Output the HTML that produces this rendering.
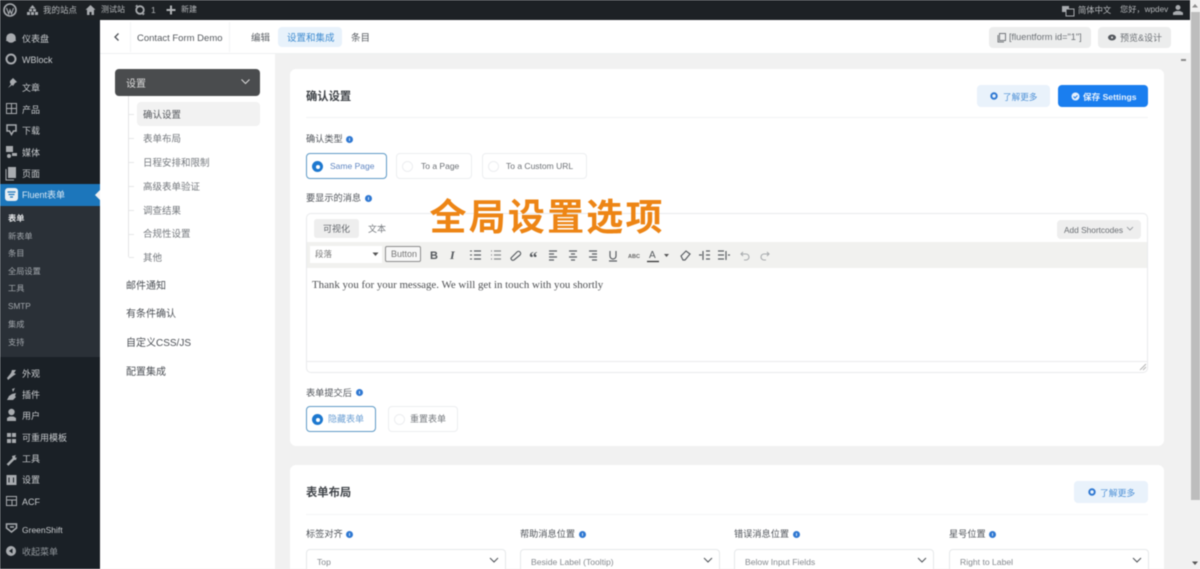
<!DOCTYPE html>
<html><head><meta charset="utf-8"><style>
html,body{margin:0;padding:0;width:1200px;height:569px;overflow:hidden;background:#f1f1f1}
body{font-family:"Liberation Sans","Noto Sans CJK SC",sans-serif;position:relative;filter:blur(.5px)}
div,span,svg{position:absolute;box-sizing:border-box}
.t{white-space:nowrap;line-height:14px}
.m{color:#c8cbce;font-size:9px;left:22px;margin-top:.5px}
.s{color:#a3a8ad;font-size:8.200px;left:8px;margin-top:1px}
.n{color:#74787d;font-size:9.500px;left:143px;margin-top:2px}
.k{color:#4c5056;font-size:10px;left:126px;margin-top:2px}
.l{color:#50545a;font-size:9.200px;margin-top:2px}
.i{width:7px;height:7px;border-radius:50%;background:#2f78d2}
.i:after{content:"";position:absolute;left:3px;top:2px;width:1px;height:3px;background:#cfe0f5}
.r{background:#fff;border:1px solid #eceef0;border-radius:4px}
.rd{width:11px;height:11px;border-radius:50%;border:1px solid #eceef0}
.on{background:#1d78cf;border:none}
.on:after{content:"";position:absolute;left:3.500px;top:3.500px;width:4px;height:4px;border-radius:50%;background:#fff}
.sel{height:30px;background:#fff;border:1px solid #e6e8ea;border-radius:4px;top:549px}
.sel .t{left:10px;top:5px;font-size:8.600px;color:#85898e}
.g{fill:#a8abaf}
.tb{fill:none;stroke:#5b5f64;stroke-width:1.200}
.tk{left:129px;width:5px;height:1px;background:#e6e7e8}
</style></head><body>
<div style="left:0;top:0;width:1190px;height:20px;background:#1d2125"></div>
<div style="left:0;top:20px;width:100px;height:549px;background:#1a2026"></div>
<div style="left:0;top:206px;width:100px;height:151px;background:#2a3037"></div>
<div style="left:0;top:184px;width:100px;height:22px;background:#1c76bb"></div>
<svg style="left:95px;top:190px" width="5" height="10"><path d="M5 0L0 5l5 5z" fill="#f1f1f1"/></svg>

<svg style="left:0;top:0" width="240" height="20">
<circle cx="10" cy="10" r="6" fill="none" stroke="#a8abaf" stroke-width="1.600"/><path d="M6.500 8l2.200 6 1.300-4 1.500 4 2-6" fill="none" stroke="#a8abaf" stroke-width="1.100"/>
<path class="g" d="M32.500 5l3 3.500h-6zM29 9h3v2.500h-3zM33 9h3v2.500h-3zM27 12h3v3h-3zM31 12h3v3h-3zM35 12h3v3h-3z"/>
<path class="g" d="M90.500 5l5 4.800h-1.500V15h-2.500v-3h-2v3H87V9.800h-1.500z"/>
<circle cx="140" cy="10" r="3.800" fill="none" stroke="#a8abaf" stroke-width="1.800"/>
<path d="M137 4.500l-2 2 3 .5zM143 15.500l2-2-3-.5z" class="g"/>
<path d="M171 5.500v9M166.500 10h9" stroke="#b0b3b6" stroke-width="2"/>
</svg>
<div class="t" style="left:43px;top:3px;font-size:8.500px;color:#b4b7ba">我的站点</div>
<div class="t" style="left:101px;top:3px;font-size:8px;color:#b4b7ba">测试站</div>
<div class="t" style="left:151px;top:3px;font-size:8.500px;color:#b4b7ba">1</div>
<div class="t" style="left:181px;top:3px;font-size:8px;color:#b4b7ba">新建</div>
<svg style="left:1060px;top:3px" width="16" height="14"><rect x="2" y="3" width="7" height="6" fill="#a8abaf"/><rect x="6" y="6" width="8" height="7" fill="#1d2125" stroke="#a8abaf"/></svg>
<div class="t" style="left:1078px;top:3px;font-size:8.300px;color:#b9bcbf">简体中文</div>
<div class="t" style="left:1120px;top:3px;font-size:8.200px;color:#b4b7ba">您好，wpdev</div>
<svg style="left:1172px;top:4px" width="12" height="12"><circle cx="6" cy="3.500" r="2.500" class="g"/><path class="g" d="M1 11V8.500l3-1.500h4l3 1.500V11z"/></svg>

<svg style="left:0;top:20px" width="100" height="549">
<path class="g" d="M6 21a5 5 0 0 1 10 0z"/><circle cx="11" cy="18" r="4.800" class="g"/>
<circle cx="11" cy="39" r="4.500" fill="none" stroke="#a8abaf" stroke-width="2"/>
<path class="g" d="M10 61l3-3 4 4-2 1-2 3-1-1-4 3 3-4-1-1z"/>
<rect x="6.500" y="83.500" width="10" height="10" fill="none" stroke="#a8abaf"/><path d="M11.500 84v10M7 88.500h10" stroke="#a8abaf"/>
<path d="M7 105h9v6h-2.500l-2 3.500-2-3.500H7z" fill="none" stroke="#a8abaf" stroke-width="1.500"/>
<path class="g" d="M6 126h7v6H6zM12 133h5v3h-5z"/><circle cx="9" cy="136" r="2" class="g"/>
<path class="g" d="M8 147h8v11H8z"/><path d="M6 149v11h8" fill="none" stroke="#a8abaf"/>
<rect x="5" y="168" width="13" height="13" rx="3" fill="#e8eef3"/><path d="M7.500 172h8M8.500 174.500h6M10 177h3" stroke="#1c76bb" stroke-width="1.300"/>
<path class="g" d="M7 358l4-5 1-3 4 0-2 3 2 1-3 2-5 4z"/>
<path class="g" d="M7 380l2-4 3-2 4-1-1 3 1 1-3 3-4 0zM12 369l3-1-2 4z"/>
<circle cx="11.500" cy="392" r="3.200" class="g"/><path class="g" d="M7 401v-3l2.500-1.500h4L16 398v3z"/>
<path class="g" d="M7 413h4v4H7zM12 413h4v4h-4zM7 419h4v4H7zM12 419h4v4h-4z"/>
<path d="M7.500 445l6-6" stroke="#a8abaf" stroke-width="2.500"/><path class="g" d="M12 436l4-1-1 2 1 1 1-1-1 3-3 0z"/>
<rect x="6.500" y="455" width="10" height="10" fill="#a8abaf"/><path d="M9 457.500v5M13.500 457.500v5" stroke="#1a2026"/>
<rect x="6.500" y="476.500" width="10" height="9" fill="none" stroke="#a8abaf"/><path d="M7 480h10M12 480v5" stroke="#a8abaf"/>
<path d="M6.500 504h10v4l-5 4-5-4zM10 507h4" fill="none" stroke="#a8abaf" stroke-width="1.500"/>
<circle cx="11" cy="531" r="5" class="g"/><path d="M12.500 528.500v5L9 531z" fill="#1a2026"/>
</svg>

<div class="t m" style="top:31px">仪表盘</div>
<div class="t m" style="top:52px">WBlock</div>
<div class="t m" style="top:80px">文章</div>
<div class="t m" style="top:102px">产品</div>
<div class="t m" style="top:123px">下载</div>
<div class="t m" style="top:145px">媒体</div>
<div class="t m" style="top:166px">页面</div>
<div class="t m" style="top:187px;color:#dbe9f4">Fluent表单</div>
<div class="t s" style="top:211px;color:#e4e6e8;font-weight:bold">表单</div>
<div class="t s" style="top:229px">新表单</div>
<div class="t s" style="top:246px">条目</div>
<div class="t s" style="top:264px">全局设置</div>
<div class="t s" style="top:281px">工具</div>
<div class="t s" style="top:299px">SMTP</div>
<div class="t s" style="top:317px">集成</div>
<div class="t s" style="top:335px">支持</div>
<div class="t m" style="top:366px">外观</div>
<div class="t m" style="top:387px">插件</div>
<div class="t m" style="top:408px">用户</div>
<div class="t m" style="top:430px">可重用模板</div>
<div class="t m" style="top:451px">工具</div>
<div class="t m" style="top:472px">设置</div>
<div class="t m" style="top:494px">ACF</div>
<div class="t m" style="top:522px;font-size:8.500px">GreenShift</div>
<div class="t m" style="top:544px;color:#92979c">收起菜单</div>

<div style="left:100px;top:20px;width:1090px;height:34px;background:#fff;border-bottom:1px solid #eef0f1"></div>
<div style="left:100px;top:54px;width:175px;height:515px;background:#fff"></div>
<svg style="left:112px;top:31px" width="10" height="12"><path d="M6.500 2.500L3 6l3.500 3.500" fill="none" stroke="#4e5257" stroke-width="1.300"/></svg>
<div style="left:130px;top:22px;width:1px;height:30px;background:#f3f4f5"></div>
<div style="left:229px;top:22px;width:1px;height:30px;background:#f3f4f5"></div>
<div class="t" style="left:137px;top:30px;margin-top:1.500px;font-size:9.500px;color:#55595e">Contact Form Demo</div>
<div class="t" style="left:251px;top:32px;font-size:9.500px;color:#5a5e63">编辑</div>
<div style="left:278px;top:27px;width:64px;height:20px;background:#e8f2fb;border-radius:4px"></div>
<div class="t" style="left:287px;top:32px;font-size:9.500px;color:#3e8bd0">设置和集成</div>
<div class="t" style="left:351px;top:32px;font-size:9.500px;color:#5a5e63">条目</div>
<div style="left:989px;top:27px;width:102px;height:21px;background:#eceded;border-radius:4px"></div>
<svg style="left:997px;top:32px" width="10" height="11"><rect x="2.500" y="1.500" width="6" height="7" fill="none" stroke="#75797d"/><path d="M1 3v7h6" fill="none" stroke="#75797d"/></svg>
<div class="t" style="left:1009px;top:30px;font-size:9.200px;color:#6d7176">[fluentform id="1"]</div>
<div style="left:1098px;top:27px;width:73px;height:21px;background:#eceded;border-radius:4px"></div>
<svg style="left:1107px;top:33px" width="10" height="9"><ellipse cx="5" cy="4.500" rx="4" ry="3" fill="#55595e"/><circle cx="5" cy="4.500" r="1" fill="#eee"/></svg>
<div class="t" style="left:1120px;top:31px;font-size:9px;color:#6d7176">预览&amp;设计</div>

<!-- left nav -->
<div style="left:115px;top:69px;width:145px;height:27px;background:#4a4c4e;border-radius:4px"></div>
<div class="t" style="left:126px;top:77.500px;font-size:10px;color:#dcdcdc">设置</div>
<svg style="left:240px;top:78px" width="11" height="8"><path d="M1.500 1.500l4 4 4-4" fill="none" stroke="#d5d5d5" stroke-width="1.100"/></svg>
<div style="left:128px;top:96px;width:1px;height:161px;background:#e3e4e5"></div>
<div class="tk" style="top:114px"></div><div class="tk" style="top:138px"></div><div class="tk" style="top:162px"></div><div class="tk" style="top:186px"></div><div class="tk" style="top:210px"></div><div class="tk" style="top:234px"></div><div class="tk" style="top:257px"></div>
<div style="left:137px;top:102px;width:123px;height:24px;background:#f2f2f2;border-radius:4px"></div>
<div class="t n" style="top:107px;color:#54575c">确认设置</div>
<div class="t n" style="top:131px">表单布局</div>
<div class="t n" style="top:155px">日程安排和限制</div>
<div class="t n" style="top:179px">高级表单验证</div>
<div class="t n" style="top:203px">调查结果</div>
<div class="t n" style="top:226px">合规性设置</div>
<div class="t n" style="top:250px">其他</div>
<div class="t k" style="top:278px">邮件通知</div>
<div class="t k" style="top:306px">有条件确认</div>
<div class="t k" style="top:335px">自定义CSS/JS</div>
<div class="t k" style="top:364px">配置集成</div>

<!-- card 1 -->
<div style="left:290px;top:69px;width:874px;height:377px;background:#fff;border-radius:6px"></div>
<div class="t" style="left:306px;top:90px;font-size:11.300px;font-weight:bold;color:#3f4348">确认设置</div>
<div style="left:306px;top:117px;width:842px;height:1px;background:#f2f3f4"></div>
<div style="left:977px;top:85px;width:73px;height:22px;background:#e9f2fb;border-radius:4px"></div>
<svg style="left:990px;top:92px" width="8" height="8"><circle cx="4" cy="4" r="2.700" fill="none" stroke="#2f78d2" stroke-width="2"/></svg>
<div class="t" style="left:1003px;top:90px;font-size:8.600px;color:#4d90d6">了解更多</div>
<div style="left:1058px;top:85px;width:90px;height:22px;background:#1a7eef;border-radius:4px"></div>
<svg style="left:1071px;top:92px" width="9" height="9"><circle cx="4.500" cy="4.500" r="4" fill="#e6f0fc"/><path d="M2.500 4.500l1.500 1.500 2.500-2.500" fill="none" stroke="#1a7eef"/></svg>
<div class="t" style="left:1083px;top:90px;font-size:8.600px;font-weight:bold;color:#e8f2fd">保存 Settings</div>

<div class="t l" style="left:306px;top:130px">确认类型</div><div class="i" style="left:346px;top:136px"></div>
<div class="r" style="left:306px;top:153px;width:81px;height:26px;border-color:#5f9ac6"></div>
<div class="rd on" style="left:312px;top:161px"></div>
<div class="t" style="left:330px;top:159px;font-size:8.500px;color:#5f86c2">Same Page</div>
<div class="r" style="left:396px;top:153px;width:76px;height:26px"></div><div class="rd" style="left:402px;top:161px"></div>
<div class="t" style="left:421px;top:159px;font-size:8.500px;color:#6c7075">To a Page</div>
<div class="r" style="left:482px;top:153px;width:105px;height:26px"></div><div class="rd" style="left:488px;top:161px"></div>
<div class="t" style="left:506px;top:159px;font-size:8.500px;color:#6c7075">To a Custom URL</div>

<div class="t l" style="left:306px;top:189px">要显示的消息</div><div class="i" style="left:365px;top:195px"></div>

<div style="left:306px;top:213px;width:842px;height:160px;background:#fff;border:1px solid #e9eaec;border-radius:5px"></div>
<div style="left:314px;top:219px;width:45px;height:19px;background:#eee;border-radius:3px"></div>
<div class="t" style="left:323px;top:222px;font-size:9px;color:#62666b">可视化</div>
<div class="t" style="left:368px;top:222px;font-size:9px;color:#74787d">文本</div>
<div style="left:1057px;top:220px;width:84px;height:19px;background:#eeeeee;border-radius:4px"></div>
<div class="t" style="left:1064px;top:223px;font-size:8.300px;color:#6a6e73">Add Shortcodes</div>
<svg style="left:1126px;top:226px" width="8" height="6"><path d="M1 1l3 3 3-3" fill="none" stroke="#8b8f93" stroke-width=".8"/></svg>
<div style="left:307px;top:242px;width:840px;height:26px;background:#f1f1ef"></div>
<div style="left:310px;top:246px;width:72px;height:17px;background:#fff"></div>
<div class="t" style="left:315px;top:247px;font-size:8.500px;color:#777">段落</div>
<svg style="left:372px;top:252px" width="7" height="5"><path d="M.5.500h6L3.500 4z" fill="#555"/></svg>
<div style="left:385px;top:246px;width:36px;height:16px;border:1px solid #8e8e8e;border-radius:2px;background:#f7f7f7"></div>
<div class="t" style="left:391px;top:247px;font-size:9px;color:#777">Button</div>
<svg style="left:427px;top:246px" width="350" height="18">
<text x="3" y="13" font-family="Liberation Sans" font-weight="bold" font-size="11" fill="#55595d">B</text>
<text x="23" y="13" font-family="Liberation Serif" font-style="italic" font-weight="bold" font-size="12" fill="#55595d">I</text>
<path class="tb" d="M47 5h7M47 9h7M47 13h7"/><path stroke="#55595d" d="M43 5h2M43 9h2M43 13h2"/>
<path class="tb" stroke-width=".8" style="opacity:.7" d="M67 5h7M67 9h7M67 13h7M64 5h1M64 9h1M64 13h1"/>
<path class="tb" d="M84 12l6-6a2 2 0 0 1 3 3l-6 5a2 2 0 0 1-3-2zM87 9l-3 3"/>
<text x="102" y="17" font-family="Liberation Serif" font-weight="bold" font-size="17" fill="#55595d">“</text>
<path class="tb" d="M122 5h8M122 8h5M122 11h8M122 14h5"/>
<path class="tb" d="M142 5h8M144 8h4M142 11h8M144 14h4"/>
<path class="tb" d="M162 5h8M165 8h5M162 11h8M165 14h5"/>
<path class="tb" d="M183 5v5a3 3 0 0 0 6 0V5M182 15h8"/>
<text x="201" y="12" font-family="Liberation Sans" font-size="5.500" font-weight="bold" fill="#666">ABC</text>
<text x="222" y="12" font-family="Liberation Sans" font-size="10" fill="#55595d">A</text><path d="M220 15.500h12" stroke="#333" stroke-width="1.300"/>
<path d="M237 8h5l-2.500 3z" fill="#555"/>
<path class="tb" d="M254 10l5-5 4 3-5 6h-2z"/>
<path class="tb" d="M276 5v9M279 5h4M279 9h4M279 13h4M272 9h3"/>
<path class="tb" d="M291 5h6M291 9h6M291 13h6M299 5v9M301 9h2"/>
<path fill="none" stroke="#a9acaf" stroke-width="1.100" d="M316 6l-2 2 2 2M314 8h5a3 3 0 0 1 0 6h-2M340 6l2 2-2 2M342 8h-5a3 3 0 0 0 0 6h2"/>
</svg>
<div class="t" style="left:312px;top:278px;font-family:'Liberation Serif',serif;font-size:10.860px;color:#4d4f52">Thank you for your message. We will get in touch with you shortly</div>
<div style="left:307px;top:361px;width:840px;height:1px;background:#eaebed"></div>
<svg style="left:1139px;top:363px" width="8" height="8"><path d="M7 1L1 7M7 4L4 7" stroke="#b5b5b5"/></svg>

<div class="t" style="left:429.500px;top:193px;font-size:37px;line-height:42px;font-weight:bold;color:#ed8515;letter-spacing:2.200px;font-family:'Noto Sans CJK SC',sans-serif">全局设置选项</div>

<div class="t l" style="left:306px;top:384px">表单提交后</div><div class="i" style="left:356px;top:389px"></div>
<div class="r" style="left:306px;top:406px;width:70px;height:26px;border-color:#5f9ac6"></div>
<div class="rd on" style="left:312px;top:414px"></div>
<div class="t" style="left:328px;top:412px;font-size:9px;color:#6b9fd4">隐藏表单</div>
<div class="r" style="left:388px;top:406px;width:70px;height:26px"></div><div class="rd" style="left:394px;top:414px"></div>
<div class="t" style="left:410px;top:412px;font-size:9px;color:#74787d">重置表单</div>

<!-- card 2 -->
<div style="left:290px;top:465px;width:874px;height:104px;background:#fff;border-radius:6px 6px 0 0"></div>
<div class="t" style="left:306px;top:486px;font-size:11.300px;font-weight:bold;color:#3f4348">表单布局</div>
<div style="left:306px;top:514px;width:842px;height:1px;background:#f4f5f6"></div>
<div style="left:1074px;top:481px;width:74px;height:22px;background:#e9f2fb;border-radius:4px"></div>
<svg style="left:1088px;top:488px" width="8" height="8"><circle cx="4" cy="4" r="2.700" fill="none" stroke="#2f78d2" stroke-width="2"/></svg>
<div class="t" style="left:1100px;top:486px;font-size:8.800px;color:#4d90d6">了解更多</div>
<div class="t l" style="left:306px;top:525px">标签对齐</div><div class="i" style="left:346px;top:531px"></div>
<div class="t l" style="left:520px;top:525px">帮助消息位置</div><div class="i" style="left:579px;top:531px"></div>
<div class="t l" style="left:734px;top:525px">错误消息位置</div><div class="i" style="left:793px;top:531px"></div>
<div class="t l" style="left:949px;top:525px">星号位置</div><div class="i" style="left:989px;top:531px"></div>
<div class="sel" style="left:306px;width:200px"><div class="t">Top</div></div>
<div class="sel" style="left:520px;width:200px"><div class="t">Beside Label (Tooltip)</div></div>
<div class="sel" style="left:734px;width:200px"><div class="t">Below Input Fields</div></div>
<div class="sel" style="left:949px;width:200px"><div class="t">Right to Label</div></div>
<svg style="left:300px;top:556px" width="850" height="10" fill="none" stroke="#55595e" stroke-width="1.100"><path d="M190 2l4 4 4-4M404 2l4 4 4-4M618 2l4 4 4-4M833 2l4 4 4-4"/></svg>

<!-- scrollbar -->
<div style="left:1190px;top:0;width:10px;height:569px;background:#f1f1f1"></div>
<div style="left:1191px;top:12px;width:9px;height:488px;background:#bdbdbd"></div>
<svg style="left:1190px;top:3px" width="10" height="6"><path d="M5 1l3 3.500H2z" fill="#8b8b8b"/></svg>
<svg style="left:1190px;top:560px" width="10" height="6"><path d="M5 5L2 1.500h6z" fill="#555"/></svg>
<div style="left:1181px;top:59px;width:5px;height:2px;background:#8b8b8b"></div>
</body></html>
